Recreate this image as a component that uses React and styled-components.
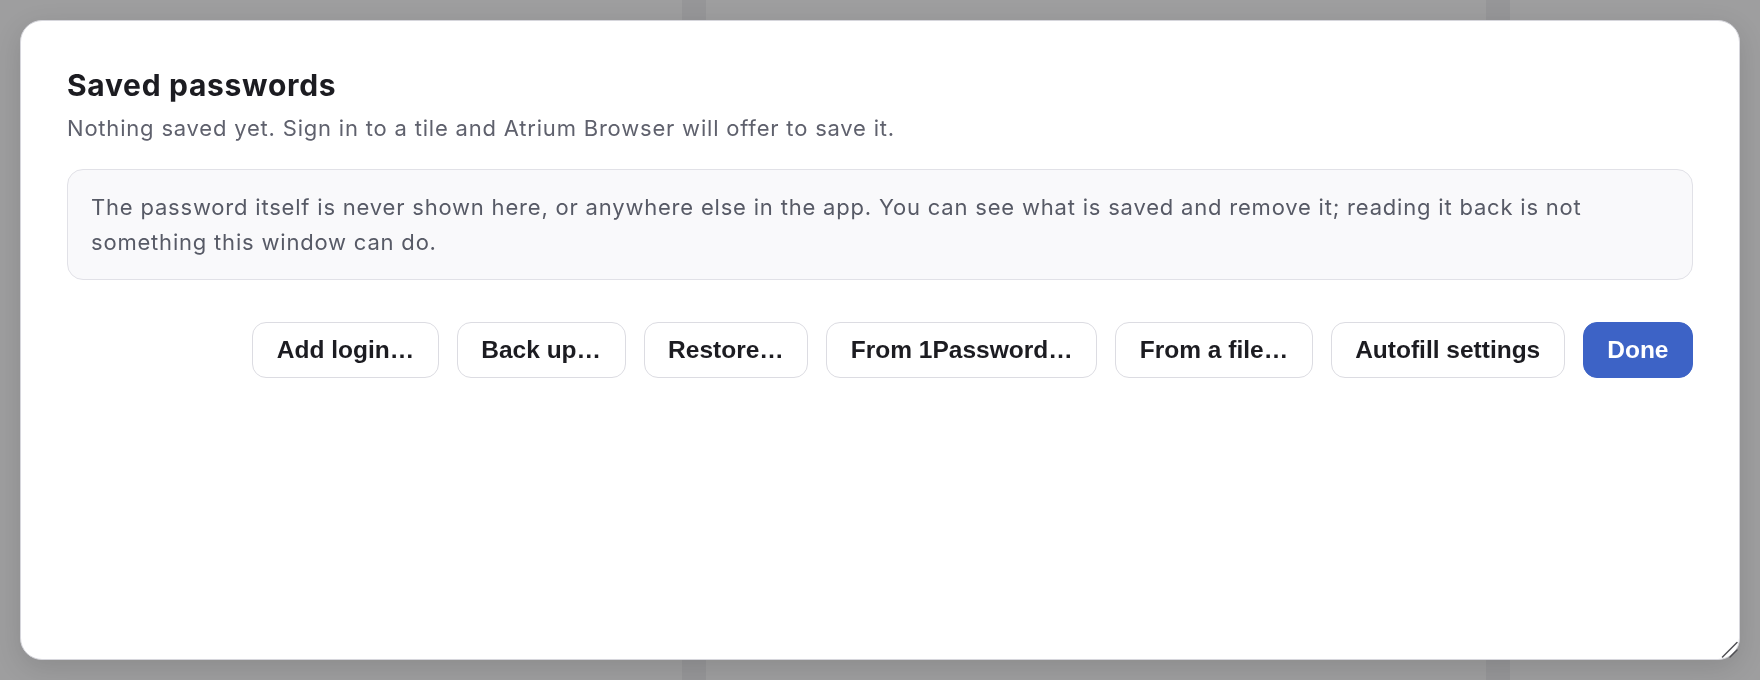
import styled, { createGlobalStyle } from "styled-components";

const GlobalStyle = createGlobalStyle`
  html, body {
    margin: 0;
    padding: 0;
    height: 100%;
  }

  body {
    background: #9e9e9f;
    font-family: Inter, "Noto Sans", sans-serif;
  }
`;

// dimmed workspace behind the modal
const Workspace = styled.div`
  display: flex;
  height: 100vh;
  gap: 24px;
  background: #969698;
`;

const Tile = styled.div`
  flex: ${(p) => (p.$width ? `0 0 ${p.$width}px` : "1")};
  background: #9e9e9f;
`;

const Overlay = styled.div`
  position: fixed;
  inset: 0;
  display: flex;
  padding: 20px;
  box-sizing: border-box;
`;

const Dialog = styled.section`
  position: relative;
  flex: 1;
  box-sizing: border-box;
  background: #ffffff;
  border: 1px solid #d6d6dc;
  border-radius: 22px;
  padding: 46px;
  box-shadow: 0 8px 28px rgba(0, 0, 0, 0.12);
`;

const Title = styled.h2`
  margin: 0;
  font-size: 30px;
  line-height: 36px;
  font-weight: 700;
  letter-spacing: 0.7px;
  color: #1c1c21;
`;

const Subtitle = styled.p`
  margin: 10px 0 0;
  font-size: 22px;
  line-height: 30px;
  letter-spacing: 0.8px;
  color: #5f616d;
`;

const Notice = styled.div`
  margin-top: 26px;
  padding: 20px 23px 19px;
  background: #f9f9fb;
  border: 1px solid #e1e1e7;
  border-radius: 16px;
  font-size: 22px;
  line-height: 35px;
  letter-spacing: 0.8px;
  color: #575a66;
`;

const Actions = styled.div`
  display: flex;
  justify-content: flex-end;
  gap: 18px;
  margin-top: 42px;
`;

const Button = styled.button`
  height: 56px;
  padding: 0 23.5px;
  border-radius: 14px;
  border: 1px solid ${(p) => (p.$primary ? "#3d63c6" : "#dcdce2")};
  background: ${(p) => (p.$primary ? "#3d63c6" : "#ffffff")};
  color: ${(p) => (p.$primary ? "#ffffff" : "#1c1c21")};
  font-family: "Liberation Sans", Arial, sans-serif;
  font-size: 24.5px;
  font-weight: 700;
  cursor: pointer;
`;

// resize grip in the bottom-right corner
const Grip = styled.svg`
  position: absolute;
  right: 1px;
  bottom: 1px;
  width: 17px;
  height: 17px;
`;

const actions = [
  "Add login…",
  "Back up…",
  "Restore…",
  "From 1Password…",
  "From a file…",
  "Autofill settings",
];

export default function App() {
  return (
    <>
      <GlobalStyle />
      <Workspace>
        <Tile $width={682} />
        <Tile />
        <Tile $width={250} />
      </Workspace>
      <Overlay>
        <Dialog>
          <Title>Saved passwords</Title>
          <Subtitle>
            Nothing saved yet. Sign in to a tile and Atrium Browser will offer
            to save it.
          </Subtitle>
          <Notice>
            The password itself is never shown here, or anywhere else in the
            app. You can see what is saved and remove it; reading it back is
            not something this window can do.
          </Notice>
          <Actions>
            {actions.map((label) => (
              <Button key={label}>{label}</Button>
            ))}
            <Button $primary>Done</Button>
          </Actions>
          <Grip viewBox="0 0 17 17">
            <path
              d="M16 1.5 L1.5 16 M16 9 L9 16"
              stroke="#505054"
              strokeWidth="1.5"
              strokeLinecap="round"
              fill="none"
            />
          </Grip>
        </Dialog>
      </Overlay>
    </>
  );
}
